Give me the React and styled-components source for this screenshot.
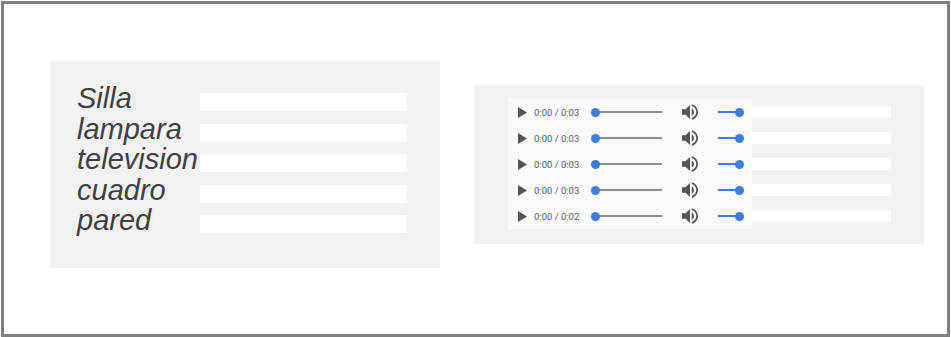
import styled, { createGlobalStyle } from 'styled-components';

const GlobalStyle = createGlobalStyle`
  html, body {
    margin: 0;
    padding: 0;
    background: #ffffff;
  }
  body {
    font-family: 'Liberation Sans', Arial, sans-serif;
  }
`;

const words = ['Silla', 'lampara', 'television', 'cuadro', 'pared'];
const clips = ['0:03', '0:03', '0:03', '0:03', '0:02'];

const PlayIcon = () => (
  <svg width="9" height="11" viewBox="0 0 9 11">
    <polygon points="0,0 9,5.5 0,11" fill="#555" />
  </svg>
);

const VolumeIcon = () => (
  <svg width="16" height="16" viewBox="3 3 18 18">
    <path
      fill="#555"
      d="M3 9v6h4l5 5V4L7 9H3zm13.5 3c0-1.77-1.02-3.29-2.5-4.03v8.05c1.48-.73 2.5-2.250 2.5-4.02zM14 3.23v2.06c2.89.86 5 3.54 5 6.71s-2.11 5.85-5 6.71v2.06c4.01-.91 7-4.49 7-8.77s-2.99-7.86-7-8.77z"
    />
  </svg>
);

const App = () => {
  return (
    <>
      <GlobalStyle />
      <Frame>
        <WordPanel>
          {words.map((w) => (
            <WordRow key={w}>
              <Label>{w}</Label>
              <Field />
            </WordRow>
          ))}
        </WordPanel>
        <AudioPanel>
          <AudioList>
            {clips.map((len, i) => (
              <AudioRow key={i}>
                <Player>
                  <PlayButton>
                    <PlayIcon />
                  </PlayButton>
                  <Time>0:00 / {len}</Time>
                  <Track $width={67}>
                    <Thumb $left={0} />
                  </Track>
                  <VolumeButton>
                    <VolumeIcon />
                  </VolumeButton>
                  <Track $width={21} $filled>
                    <Thumb $left={21} />
                  </Track>
                </Player>
                <SmallField />
              </AudioRow>
            ))}
          </AudioList>
        </AudioPanel>
      </Frame>
    </>
  );
};

const Frame = styled.div`
  box-sizing: border-box;
  margin: 1px 0 0 1px;
  width: 949px;
  height: 336px;
  border: 3px solid #808080;
  display: flex;
  align-items: flex-start;
  gap: 34px;
  padding: 57px 0 0 46px;
`;

const WordPanel = styled.div`
  box-sizing: border-box;
  width: 390px;
  height: 207px;
  background: #f2f2f2;
  padding: 22px 0 0 27px;
  display: flex;
  flex-direction: column;
`;

const WordRow = styled.div`
  display: flex;
  align-items: flex-start;
  height: 30.6px;
`;

const Label = styled.span`
  width: 123px;
  font-family: 'Liberation Sans', Arial, sans-serif;
  font-style: italic;
  font-size: 29px;
  line-height: 30.6px;
  color: #404040;
  white-space: nowrap;
`;

const Field = styled.div`
  width: 207px;
  height: 18px;
  margin-top: 10px;
  background: #ffffff;
`;

const AudioPanel = styled.div`
  box-sizing: border-box;
  width: 450px;
  height: 159px;
  margin-top: 24px;
  background: #f2f2f2;
  padding: 13px 0 0 34px;
`;

const AudioList = styled.div`
  display: flex;
  flex-direction: column;
`;

const AudioRow = styled.div`
  display: flex;
  align-items: center;
  height: 26px;

  &:first-child {
    padding-top: 1px;
    background: linear-gradient(#fafafa, #fafafa) no-repeat 0 0 / 244px 1px;
  }
`;

const Player = styled.div`
  box-sizing: border-box;
  width: 244px;
  height: 26px;
  background: #fafafa;
  display: flex;
  align-items: center;
  padding-left: 10px;
`;

const PlayButton = styled.div`
  display: flex;
  width: 16px;
`;

const Time = styled.span`
  font-family: Roboto, 'Liberation Sans', sans-serif;
  font-size: 9.5px;
  color: #5a5a5a;
  width: 61px;
  white-space: nowrap;
`;

const Track = styled.div`
  position: relative;
  width: ${(p) => p.$width}px;
  height: 1.5px;
  background: ${(p) => (p.$filled ? '#3b7ee0' : '#8a8a8a')};
`;

const Thumb = styled.div`
  position: absolute;
  left: ${(p) => p.$left - 4.5}px;
  top: -3.75px;
  width: 9px;
  height: 9px;
  border-radius: 50%;
  background: #3b7ee0;
`;

const VolumeButton = styled.div`
  display: flex;
  margin: 0 20px 0 20px;
`;

const SmallField = styled.div`
  width: 139px;
  height: 12px;
  background: #ffffff;
`;

export default App;
